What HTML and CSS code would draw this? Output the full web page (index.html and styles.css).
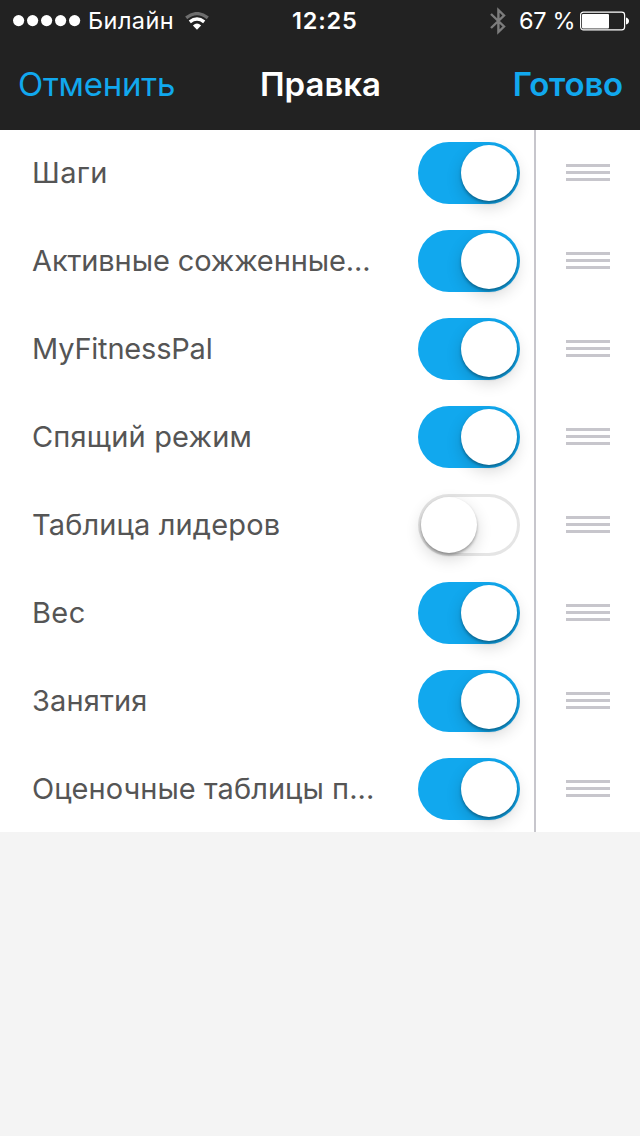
FILE: index.html
```html
<!DOCTYPE html>
<html lang="ru">
<head>
<meta charset="utf-8">
<title>Правка</title>
<link rel="stylesheet" href="styles.css">
</head>
<body>
<header class="header">
  <div class="status">
    <div class="carrier">
      <svg class="signal" width="68" height="12" viewBox="0 0 68 12" fill="#fff"><circle cx="5.6" cy="5.6" r="5.6"/><circle cx="19.6" cy="5.6" r="5.6"/><circle cx="33.6" cy="5.6" r="5.6"/><circle cx="47.6" cy="5.6" r="5.6"/><circle cx="61.6" cy="5.6" r="5.6"/></svg>
      <span class="carrier-name">Билайн</span>
      <svg class="wifi" width="24" height="18" viewBox="0 0 24 18" fill="none"><path d="M1.2 5.9Q12 -2.7 22.8 5.9" stroke="#6e6e6e" stroke-width="3.3"/><path d="M4.8 9.9Q12 4.1 19.2 9.9" stroke="#fff" stroke-width="3.4"/><path d="M7.9 13.6Q12 9.6 16.1 13.6L12 17.8Z" fill="#fff"/></svg>
    </div>
    <time class="clock">12:25</time>
    <div class="power">
      <svg class="bluetooth" width="16" height="28" viewBox="0 0 16 28" fill="none" stroke="#7c7c7c" stroke-width="2.4"><path d="M1 7L14 19.5L8.4 25V3L14 8.5L1 21"/></svg>
      <span class="percent">67 %</span>
      <svg class="battery" width="49" height="20" viewBox="0 0 49 20"><rect x=".6" y="1.1" width="44" height="17.8" rx="2.8" fill="none" stroke="#fff" stroke-width="1.2"/><rect x="2" y="3" width="27" height="14.6" rx="1" fill="#fff"/><path d="M46 6.5Q49 7.5 49 10T46 13.5Z" fill="#fff"/></svg>
    </div>
  </div>
  <nav class="nav">
    <a class="cancel">Отменить</a>
    <h1 class="title">Правка</h1>
    <a class="done">Готово</a>
  </nav>
</header>
<main class="list">
  <div class="row"><span class="label steps">Шаги</span><span class="toggle on"><i class="knob"></i></span><span class="grip"><i></i><i></i><i></i></span></div>
  <div class="row"><span class="label calories">Активные сожженные...</span><span class="toggle on"><i class="knob"></i></span><span class="grip"><i></i><i></i><i></i></span></div>
  <div class="row"><span class="label fitness">MyFitnessPal</span><span class="toggle on"><i class="knob"></i></span><span class="grip"><i></i><i></i><i></i></span></div>
  <div class="row"><span class="label sleep">Спящий режим</span><span class="toggle on"><i class="knob"></i></span><span class="grip"><i></i><i></i><i></i></span></div>
  <div class="row"><span class="label leaders">Таблица лидеров</span><span class="toggle"><i class="knob"></i></span><span class="grip"><i></i><i></i><i></i></span></div>
  <div class="row"><span class="label weight">Вес</span><span class="toggle on"><i class="knob"></i></span><span class="grip"><i></i><i></i><i></i></span></div>
  <div class="row"><span class="label workouts">Занятия</span><span class="toggle on"><i class="knob"></i></span><span class="grip"><i></i><i></i><i></i></span></div>
  <div class="row"><span class="label scores">Оценочные таблицы п...</span><span class="toggle on"><i class="knob"></i></span><span class="grip"><i></i><i></i><i></i></span></div>
</main>
</body>
</html>
```
FILE: styles.css
```css
* { box-sizing: border-box; }
body {
  margin: 0;
  min-height: 1136px;
  background: #f4f4f4;
  font-family: Inter, "Noto Sans", sans-serif;
  color: #555;
}
.header { height: 130px; background: #222; color: #fff; }
.status {
  display: grid;
  grid-template-columns: 279px auto 1fr;
  align-items: center;
  height: 41px;
  padding: 0 11px 0 13px;
  font-size: 23.5px;
  line-height: 28px;
  white-space: nowrap;
}
.carrier, .power { display: flex; align-items: center; }
.power { justify-content: flex-end; }
.carrier-name { margin-left: 7px; width: 86px; letter-spacing: .4px; }
.wifi { margin-left: 11px; }
.clock { font-weight: 600; letter-spacing: .85px; }
.percent { margin-left: 13px; width: 57px; letter-spacing: -.3px; }
.battery { margin-left: 4px; }
.nav {
  display: grid;
  grid-template-columns: 1fr auto 1fr;
  align-items: center;
  height: 86px;
  padding: 0 17px 0 18px;
  font-size: 33px;
  line-height: 40px;
}
.title { margin: 0; font-size: 33px; font-weight: 600; }
.cancel, .done { color: #11a8ee; }
.cancel { letter-spacing: -.25px; }
.done { justify-self: end; font-weight: 600; letter-spacing: -.2px; }
.list { height: 702px; overflow: hidden; background: #fff; }
.row {
  display: grid;
  grid-template-columns: 386px 116px 1fr;
  align-items: center;
  height: 88px;
  padding: 0 0 2px 32px;
  background: linear-gradient(#c7c6cc, #c7c6cc) 534px 0 / 2px 100% no-repeat;
}
.label { font-size: 29px; line-height: 36px; white-space: nowrap; }
.steps { letter-spacing: .4px; }
.calories { letter-spacing: -.12px; }
.fitness { letter-spacing: -.2px; }
.sleep { letter-spacing: .16px; }
.leaders { letter-spacing: .14px; }
.weight { letter-spacing: .4px; }
.workouts { letter-spacing: .12px; }
.scores { letter-spacing: .05px; }
.toggle {
  display: flex;
  width: 102px;
  height: 62px;
  padding: 3px;
  border-radius: 31px;
  box-shadow: inset 0 0 0 3px #e5e5e5;
}
.toggle.on { justify-content: flex-end; background: #11a8ee; box-shadow: none; }
.knob {
  width: 56px;
  height: 56px;
  border-radius: 50%;
  background: #fff;
  box-shadow: 0 6px 16px rgba(0, 0, 0, .16), 0 2px 3px rgba(0, 0, 0, .32);
}
.grip { display: grid; gap: 4px; width: 44px; margin-left: 32px; padding-bottom: 1px; }
.grip i { height: 3px; background: #c7c6cc; }
```
